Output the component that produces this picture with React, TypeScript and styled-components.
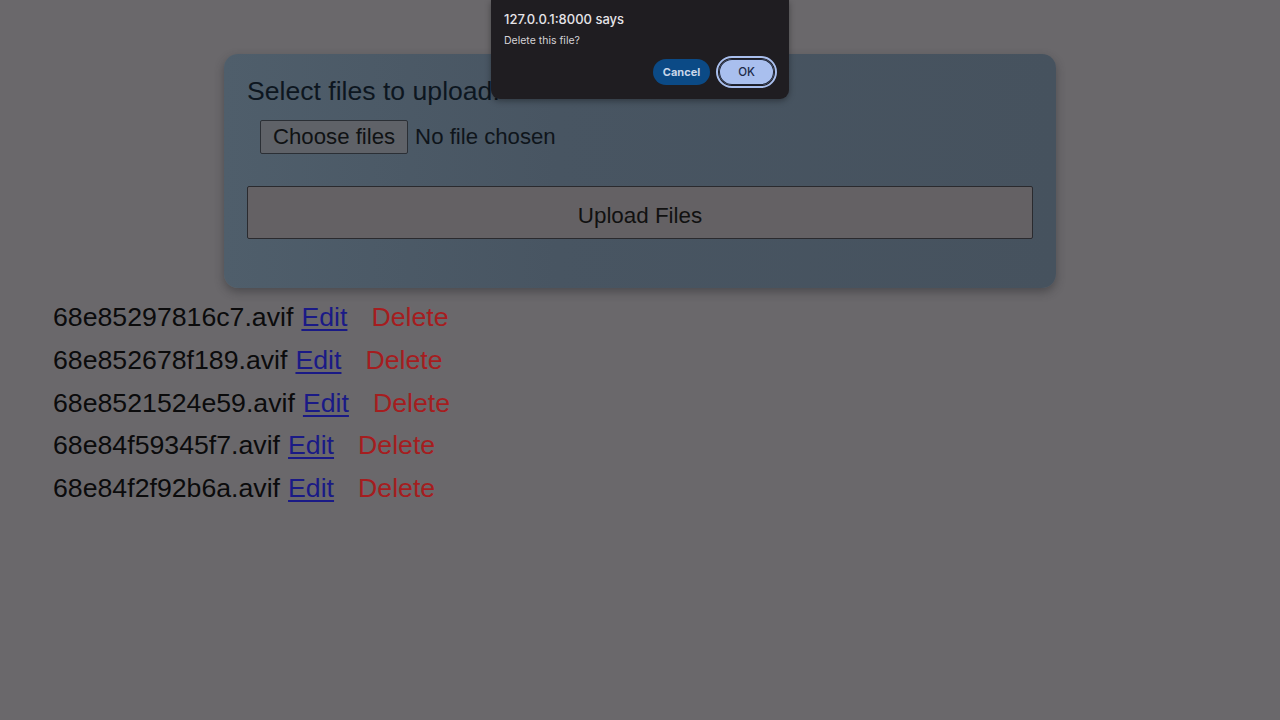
import {FC} from 'react';
import styled, {createGlobalStyle} from 'styled-components';

const GlobalStyle = createGlobalStyle`
  html, body {
    margin: 0;
    padding: 0;
    background: #6a686b;
    font-family: "Liberation Sans", Arial, sans-serif;
    color: #0b0b0d;
  }
`;

const Page = styled.div`
  position: relative;
  width: 1280px;
  height: 720px;
  overflow: hidden;
  padding-top: 54px;
  box-sizing: border-box;
`;

const UploadCard = styled.form`
  width: 832px;
  height: 234px;
  margin: 0 auto;
  box-sizing: border-box;
  padding: 22px 23px;
  border-radius: 14px;
  background: linear-gradient(to right, #4f5e6b, #485562 40%, #46525e);
  box-shadow: 0 4px 10px rgba(40, 40, 44, 0.45);
`;

const CardTitle = styled.h2`
  margin: 0;
  font-size: 26.6px;
  font-weight: normal;
  line-height: 30px;
  color: #0d1620;
`;

const FileRow = styled.div`
  display: flex;
  align-items: center;
  gap: 7px;
  margin: 14px 0 0 13px;
`;

const ChooseButton = styled.button`
  height: 34px;
  padding: 0 12px;
  font-family: inherit;
  font-size: 22.2px;
  color: #101214;
  background: #5f6268;
  border: 1px solid #2b2f35;
  border-radius: 2px;
`;

const NoFile = styled.span`
  font-size: 22.2px;
  color: #0f151b;
`;

const UploadButton = styled.button`
  display: block;
  width: 100%;
  height: 53px;
  margin-top: 32px;
  padding-top: 7px;
  font-family: inherit;
  font-size: 22.4px;
  color: #111;
  background: #646164;
  border: 1px solid #2a2a2e;
  border-radius: 2px;
`;

const FileList = styled.ul`
  list-style: none;
  margin: 12px 0 0;
  padding: 0 0 0 53px;
`;

const FileItem = styled.li`
  font-size: 26.7px;
  line-height: 30px;
  height: 42.75px;
  display: flex;
  align-items: flex-start;
  padding-top: 2px;
  box-sizing: border-box;
`;

const FileName = styled.span`
  color: #0b0b0c;
  margin-right: 8px;
`;

const EditLink = styled.a`
  color: #1a1a86;
  text-decoration: underline;
  text-underline-offset: 3px;
`;

const DeleteLink = styled.a`
  color: #a51d1f;
  margin-left: 24px;
  text-decoration: none;
`;

const Dialog = styled.div`
  position: absolute;
  top: 0;
  left: 491px;
  width: 298px;
  height: 99px;
  box-sizing: border-box;
  padding: 12px 13px 0;
  background: #1f1d21;
  border-radius: 0 0 9px 9px;
  box-shadow: 0 2px 6px rgba(0, 0, 0, 0.35);
  font-family: Inter, "Noto Sans", sans-serif;
`;

const DialogTitle = styled.div`
  font-size: 13px;
  font-weight: 500;
  color: #e6e4e8;
  line-height: 14px;
`;

const DialogMessage = styled.div`
  margin-top: 8px;
  font-size: 10.5px;
  color: #d4d2d6;
  line-height: 13px;
`;

const DialogActions = styled.div`
  display: flex;
  justify-content: flex-end;
  align-items: center;
  gap: 9px;
  margin-top: 12px;
`;

const DialogButton = styled.button<{$primary?: boolean}>`
  font-family: inherit;
  font-size: ${p => (p.$primary ? '11.5px' : '11px')};
  font-weight: ${p => (p.$primary ? 500 : 700)};
  height: 26px;
  padding: 0;
  width: ${p => (p.$primary ? '55px' : '57px')};
  border-radius: 13px;
  border: none;
  color: ${p => (p.$primary ? '#1d2a48' : '#c9d6ea')};
  background: ${p => (p.$primary ? '#a9bfee' : '#0b4a86')};
  outline: ${p => (p.$primary ? '2px solid #a9bfee' : 'none')};
  outline-offset: 1px;
  box-shadow: ${p => (p.$primary ? 'inset 0 0 0 1px #1d2436' : 'none')};
  margin-right: ${p => (p.$primary ? '2px' : '0')};
`;

const files = [
  '68e85297816c7.avif',
  '68e852678f189.avif',
  '68e8521524e59.avif',
  '68e84f59345f7.avif',
  '68e84f2f92b6a.avif',
];

const App: FC = () => {
  return (
    <Page>
      <GlobalStyle />
      <UploadCard onSubmit={e => e.preventDefault()}>
        <CardTitle>Select files to upload:</CardTitle>
        <FileRow>
          <ChooseButton type='button'>Choose files</ChooseButton>
          <NoFile>No file chosen</NoFile>
        </FileRow>
        <UploadButton type='submit'>Upload Files</UploadButton>
      </UploadCard>
      <FileList>
        {files.map(name => (
          <FileItem key={name}>
            <FileName>{name}</FileName>
            <EditLink href='#'>Edit</EditLink>
            <DeleteLink href='#'>Delete</DeleteLink>
          </FileItem>
        ))}
      </FileList>
      <Dialog role='alertdialog'>
        <DialogTitle>127.0.0.1:8000 says</DialogTitle>
        <DialogMessage>Delete this file?</DialogMessage>
        <DialogActions>
          <DialogButton type='button'>Cancel</DialogButton>
          <DialogButton type='button' $primary>
            OK
          </DialogButton>
        </DialogActions>
      </Dialog>
    </Page>
  );
};

export default App;
